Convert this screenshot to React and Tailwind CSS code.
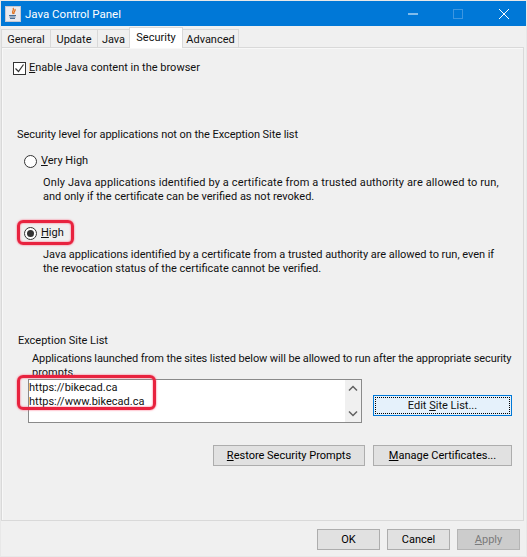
import React from "react";

const Btn = ({ children, className = "" }) => (
  <div className={`flex h-[21px] items-center justify-center border border-[#adadad] bg-[#e1e1e1] text-black ${className}`}>{children}</div>
);

const Radio = ({ checked }) => (
  <span className="flex h-[13px] w-[13px] shrink-0 items-center justify-center rounded-full border border-[#333333] bg-white">
    {checked && <span className="h-[7px] w-[7px] rounded-full bg-[#333333]" />}
  </span>
);

const Tab = ({ children, active, className = "" }) => (
  <div className={`flex items-center justify-center border border-b-0 border-[#d9d9d9] ${active
    ? "relative z-10 mb-[-1px] h-[21px] bg-white"
    : "-ml-px h-[18px] bg-[#f0f0f0] pt-[2px]"} ${className}`}>
    {children}
  </div>
);

const Ring = ({ className }) => (
  <span className={`absolute rounded-[6px] border-[3px] border-[#e8233f] shadow-[0_0_2px_#ff5070,inset_0_0_2px_#ff5070] ${className}`} />
);

export default function App() {
  return (
    <div className="flex h-[557px] w-[527px] flex-col overflow-hidden border border-[#e8e8e8] bg-[#f0f0f0] text-[11px] leading-[14px] text-[#111111]" style={{ fontFamily: 'Roboto, sans-serif' }}>
      <div className="flex h-[25px] shrink-0 items-center bg-[#0078d7] text-white">
        <svg className="ml-[4px] h-[16px] w-[16px]" viewBox="0 0 16 16">
          <rect x="0.5" y="0.5" width="15" height="15" fill="#e9e9ee" stroke="#c8c8d0" />
          <path d="M8 2c2 2-2 3 0 6M10 3c1 2-2 3-1 5" stroke="#e0701c" strokeWidth="1.3" fill="none" />
          <path d="M4 9.5h7M4.5 11h6M5 12.5h5" stroke="#4a6f95" strokeWidth="1" fill="none" />
        </svg>
        <span className="ml-[4px] text-[11.5px]">Java Control Panel</span>
        <div className="ml-auto flex items-center">
          <svg className="mr-[35px] h-[10px] w-[10px]" viewBox="0 0 10 10"><path d="M0 5h10" stroke="#fff" /></svg>
          <svg className="mr-[36px] h-[10px] w-[10px]" viewBox="0 0 10 10"><rect x="0.5" y="0.5" width="9" height="9" fill="none" stroke="#3d96e0" /></svg>
          <svg className="mr-[17px] h-[10px] w-[10px]" viewBox="0 0 10 10"><path d="M0 0l10 10M10 0L0 10" stroke="#fff" /></svg>
        </div>
      </div>

      <div className="mt-[3px] flex h-[18px] items-end pl-[1px]">
        <Tab className="w-[50px]">General</Tab>
        <Tab className="w-[48px]">Update</Tab>
        <Tab className="w-[33px]">Java</Tab>
        <Tab active className="-ml-px w-[54px]">Security</Tab>
        <Tab className="w-[57px]">Advanced</Tab>
      </div>

      <div className="mr-[2px] h-[474px] border border-[#d9d9d9] bg-[#f0f0f0] shadow-[inset_1px_1px_0_#f8f8f8]">
        <div className="ml-[11px] mt-[13px] flex h-[14px] items-center">
          <span className="flex h-[13px] w-[13px] items-center justify-center border border-[#333333] bg-white">
            <svg className="h-[11px] w-[11px]" viewBox="0 0 11 11"><path d="M1.5 5.5l3 3 5-7" stroke="#333" strokeWidth="1.2" fill="none" /></svg>
          </span>
          <span className="ml-[3px]"><u>E</u>nable Java content in the browser</span>
        </div>

        <div className="ml-[15px] mt-[53px] tracking-[-0.06px]">Security level for applications not on the Exception Site list</div>

        <div className="ml-[22px] mt-[12px] flex h-[14px] items-center gap-[4px]">
          <Radio />
          <span><u>V</u>ery High</span>
        </div>
        <div className="ml-[41px] mt-[8px] whitespace-nowrap">
          <div className="tracking-[0.13px]">Only Java applications identified by a certificate from a trusted authority are allowed to run,</div>
          <div>and only if the certificate can be verified as not revoked.</div>
        </div>

        <div className="relative ml-[22px] mt-[22px] flex h-[14px] items-center gap-[4px]">
          <Ring className="-left-[7px] -top-[6px] h-[25px] w-[57px]" />
          <Radio checked />
          <span><u>H</u>igh</span>
        </div>
        <div className="ml-[41px] mt-[8px] whitespace-nowrap">
          <div className="tracking-[-0.03px]">Java applications identified by a certificate from a trusted authority are allowed to run, even if</div>
          <div>the revocation status of the certificate cannot be verified.</div>
        </div>

        <div className="ml-[16px] mt-[58px]">Exception Site List</div>
        <div className="ml-[30px] mr-[8px] mt-[4px] whitespace-nowrap">
          <div className="tracking-[-0.1px]">Applications launched from the sites listed below will be allowed to run after the appropriate security</div>
          <div>prompts.</div>
        </div>

        <div className="ml-[26px] mr-[11px] -mt-px flex items-end justify-between">
          <div className="relative flex h-[44px] w-[334px] border border-[#8a8a8a] bg-white">
            <div className="flex-1 pt-px leading-[14px]">
              <div>https://bikecad.ca</div>
              <div>https://www.bikecad.ca</div>
            </div>
            <div className="flex w-[16px] flex-col items-center justify-between bg-[#f0f0f0] py-[5px]">
              <svg className="h-[7px] w-[10px]" viewBox="0 0 10 7"><path d="M1 5.5l4-4 4 4" stroke="#606060" strokeWidth="1.5" fill="none" /></svg>
              <svg className="h-[7px] w-[10px]" viewBox="0 0 10 7"><path d="M1 1.5l4 4 4-4" stroke="#606060" strokeWidth="1.5" fill="none" /></svg>
            </div>
            <Ring className="-left-[12px] -top-[5px] h-[35px] w-[139px]" />
          </div>
          <div className="mb-[7px] flex h-[21px] w-[139px] items-center justify-center border border-[#0078d7] bg-[#e5f1fb] p-px">
            <div className="flex h-full w-full items-center justify-center border border-dotted border-black"><span>Edit <u>S</u>ite List...</span></div>
          </div>
        </div>

        <div className="mr-[11px] mt-[22px] flex justify-end gap-[8px]">
          <Btn className="w-[152px]"><span><u>R</u>estore Security Prompts</span></Btn>
          <Btn className="w-[139px]"><span><u>M</u>anage Certificates...</span></Btn>
        </div>
      </div>

      <div className="mr-[6px] mt-[8px] flex justify-end gap-[7px]">
        <Btn className="w-[63px]">OK</Btn>
        <Btn className="w-[63px]">Cancel</Btn>
        <Btn className="w-[63px] !border-[#b5b5b5] !bg-[#cccccc] !text-[#7a7a7a]"><span><u>A</u>pply</span></Btn>
      </div>
    </div>
  );
}
